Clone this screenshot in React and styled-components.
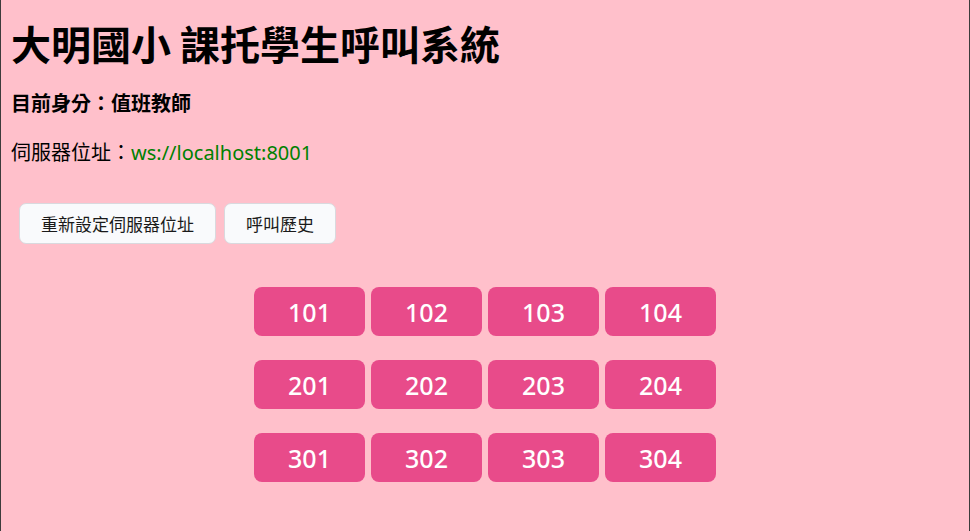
import React from 'react'
import styled, { createGlobalStyle } from 'styled-components'

const GlobalStyle = createGlobalStyle`
  html, body {
    margin: 0;
    padding: 0;
    background: #FFC0CB;
  }
  body {
    font-family: "Noto Sans CJK TC", "Noto Sans", sans-serif;
    font-size: 20px;
    color: #000;
  }
`

const Page = styled.div`
  min-height: 531px;
  box-sizing: border-box;
  padding: 0 10px 20px;
  background: #FFC0CB;
  border-left: 1px solid #3c3c3c;
  border-right: 1px solid #3c3c3c;
  display: flex;
  flex-direction: column;
`

const Title = styled.h1`
  margin: 19px 0 0;
  font-size: 40px;
  line-height: 48px;
  font-weight: 700;
`

const Role = styled.div`
  margin-top: 24px;
  font-size: 20px;
  line-height: 24px;
  font-weight: 700;
`

const ServerLine = styled.div`
  margin-top: 25px;
  font-size: 20px;
  line-height: 24px;
`

const Address = styled.span`
  color: #008000;
  font-family: "Noto Sans", sans-serif;
`

const Toolbar = styled.div`
  margin: 38px 0 0 8px;
  display: flex;
  gap: 8px;
`

const ToolButton = styled.button`
  height: 41px;
  padding: 0 21px;
  border: 1px solid #d9d9de;
  border-radius: 7px;
  background: #f9fafc;
  color: #1a1a1a;
  font-family: "Noto Sans CJK TC", sans-serif;
  font-size: 17px;
  cursor: pointer;
`

const RoomGrid = styled.div`
  margin: 43px auto 0;
  display: grid;
  grid-template-columns: repeat(4, 111px);
  column-gap: 6px;
  row-gap: 24px;
`

const RoomButton = styled.button`
  height: 49px;
  border: none;
  border-radius: 8px;
  background: #e84b8a;
  color: #fff;
  font-family: "Noto Sans", sans-serif;
  font-size: 25px;
  font-weight: 500;
  cursor: pointer;
`

const floors = [1, 2, 3]
const rooms = [1, 2, 3, 4]

export default function App() {
  return (
    <>
      <GlobalStyle />
      <Page>
        <Title>大明國小 課托學生呼叫系統</Title>
        <Role>目前身分：值班教師</Role>
        <ServerLine>
          伺服器位址：<Address>ws://localhost:8001</Address>
        </ServerLine>
        <Toolbar>
          <ToolButton>重新設定伺服器位址</ToolButton>
          <ToolButton>呼叫歷史</ToolButton>
        </Toolbar>
        <RoomGrid>
          {floors.map(f =>
            rooms.map(r => (
              <RoomButton key={`${f}0${r}`}>{`${f}0${r}`}</RoomButton>
            ))
          )}
        </RoomGrid>
      </Page>
    </>
  )
}
